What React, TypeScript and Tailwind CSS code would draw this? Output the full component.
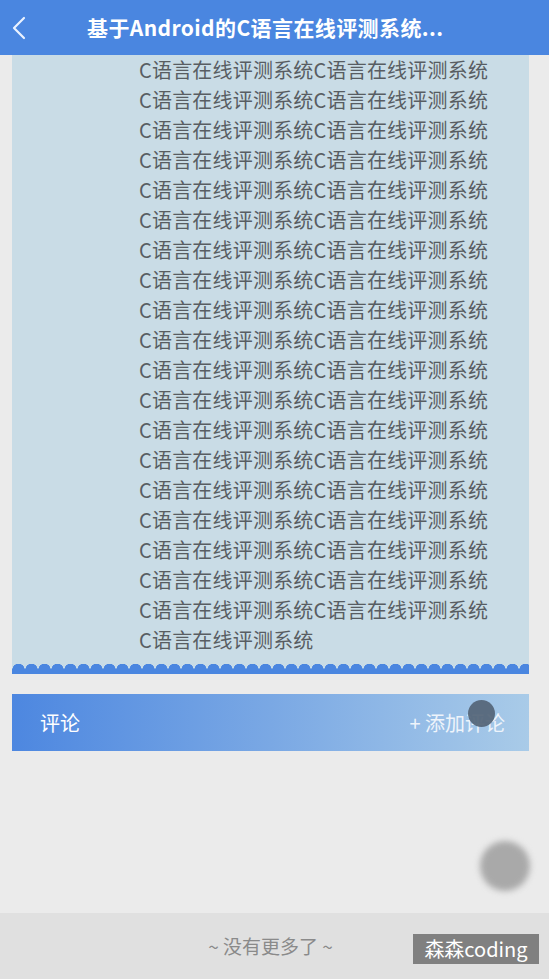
const LINE = "C语言在线评测系统C语言在线评测系统";

const lines = [...Array(19).fill(LINE), "C语言在线评测系统"];

function Header() {
  return (
    <div className="flex h-[55px] items-center bg-[#4a86e0] pr-[3px]">
      <div className="flex w-[87px] items-center pl-[11px]">
        <svg width="16" height="24" viewBox="0 0 16 24" fill="none">
          <polyline points="13,2 3,12 13,22" stroke="#eaf2ff" strokeWidth="2.2" strokeLinecap="round" strokeLinejoin="round" />
        </svg>
      </div>
      <h1 className="text-[21px] font-bold leading-none tracking-[0.4px] text-white">基于Android的C语言在线评测系统...</h1>
    </div>
  );
}

function Wave() {
  return (
    <div className="relative h-[12px]">
      <div className="absolute inset-x-0 top-0 h-[12px] bg-[radial-gradient(circle_at_50%_100%,#4a86e0_6px,transparent_6.5px)] bg-[length:13px_8px] bg-repeat-x" />
      <div className="absolute inset-x-0 bottom-0 h-[5px] bg-[#4a86e0]" />
    </div>
  );
}

export default function App() {
  return (
    <div
      className="relative flex h-[979px] w-[549px] flex-col overflow-hidden bg-[#ebebeb]"
      style={{ fontFamily: '"Noto Sans CJK SC", "Noto Sans", sans-serif' }}
    >
      <Header />

      <div className="flex flex-1 flex-col pl-[12px] pr-[20px]">
        <div className="bg-[#c9dce6]">
          <div className="pb-[7px] pl-[127px] text-[20px] leading-[30px] text-[#585d62]">
            {lines.map((l, i) => (
              <div key={i} className="whitespace-nowrap tracking-[0.2px]">{l}</div>
            ))}
          </div>
          <Wave />
        </div>

        <div className="relative mt-[20px] flex h-[57px] items-center justify-between bg-gradient-to-r from-[#4d87e0] via-[#7aa8e4] to-[#a9cbe8] pl-[28px] pr-[24px]">
          <span className="text-[20px] text-white">评论</span>
          <span className="text-[20px] text-[#eef4fb]">+ 添加评论</span>
          <div className="absolute left-[456px] top-[6px] h-[27px] w-[27px] rounded-full bg-[#56677a] opacity-95" />
        </div>
      </div>

      <div className="absolute left-[480px] top-[841px] h-[50px] w-[50px] rounded-full bg-[#a9a9a9] blur-[3px]" />

      <div className="flex h-[66px] items-center justify-center bg-[#e0e0e0] pr-[8px]">
        <span className="text-[19px] text-[#8a8a8a]">~ 没有更多了 ~</span>
      </div>

      <div className="absolute left-[413px] top-[934px] flex h-[30px] w-[126px] items-center justify-center bg-[#808080]">
        <span className="text-[20px] leading-none text-white">森森coding</span>
      </div>
    </div>
  );
}
